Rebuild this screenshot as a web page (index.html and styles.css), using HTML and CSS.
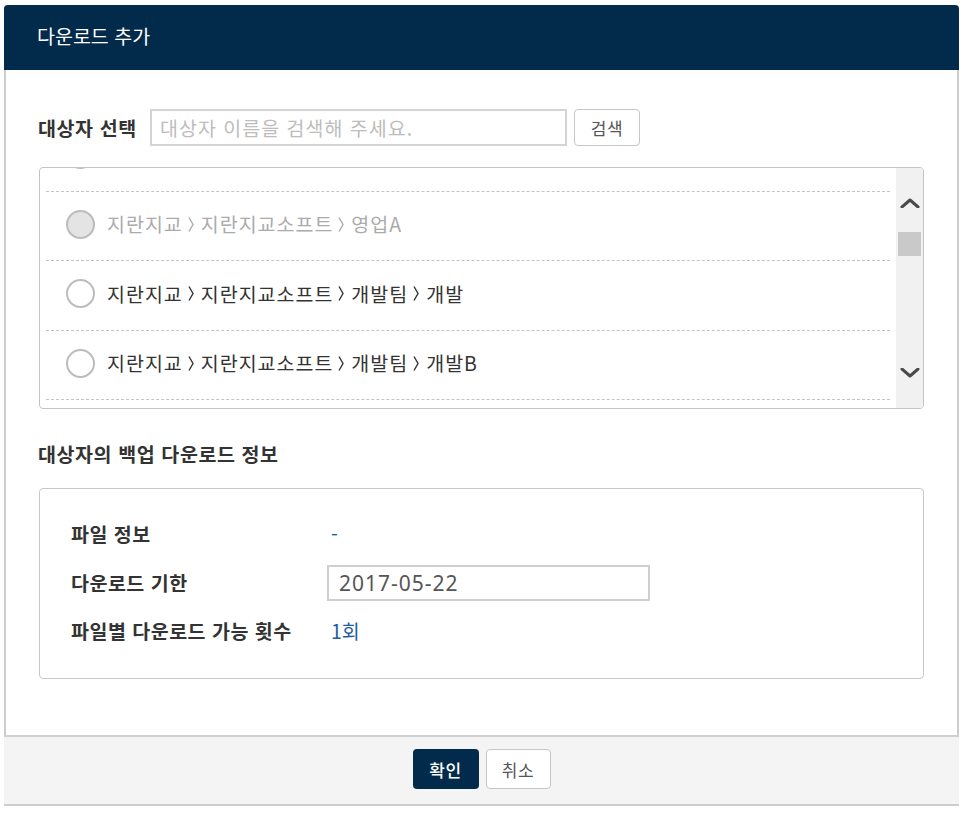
FILE: index.html
```html
<!DOCTYPE html>
<html lang="ko">
<head>
<meta charset="utf-8">
<title>다운로드 추가</title>
<link rel="stylesheet" href="styles.css">
</head>
<body>
<div class="modal">
  <div class="modal-header">다운로드 추가</div>
  <div class="modal-body">
    <div class="search-row">
      <span class="label-strong">대상자 선택</span>
      <input class="search-input" type="text" placeholder="대상자 이름을 검색해 주세요.">
      <button class="btn-light">검색</button>
    </div>

    <div class="list-box">
      <div class="list-view">
        <ul class="list">
          <li class="row"><span class="radio"></span></li>
          <li class="row disabled"><span class="radio"></span><span class="path">지란지교<svg class="sep" viewBox="0 0 6 16"><path d="M1 1 L5 8 L1 15"/></svg>지란지교소프트<svg class="sep" viewBox="0 0 6 16"><path d="M1 1 L5 8 L1 15"/></svg>영업A</span></li>
          <li class="row"><span class="radio"></span><span class="path">지란지교<svg class="sep" viewBox="0 0 6 16"><path d="M1 1 L5 8 L1 15"/></svg>지란지교소프트<svg class="sep" viewBox="0 0 6 16"><path d="M1 1 L5 8 L1 15"/></svg>개발팀<svg class="sep" viewBox="0 0 6 16"><path d="M1 1 L5 8 L1 15"/></svg>개발</span></li>
          <li class="row"><span class="radio"></span><span class="path">지란지교<svg class="sep" viewBox="0 0 6 16"><path d="M1 1 L5 8 L1 15"/></svg>지란지교소프트<svg class="sep" viewBox="0 0 6 16"><path d="M1 1 L5 8 L1 15"/></svg>개발팀<svg class="sep" viewBox="0 0 6 16"><path d="M1 1 L5 8 L1 15"/></svg>개발B</span></li>
          <li class="row"><span class="radio"></span></li>
        </ul>
      </div>
      <div class="scrollbar">
        <svg class="arrow up" viewBox="0 0 20 10"><path d="M2 9 L10 2 L18 9"/></svg>
        <div class="thumb-track"><div class="thumb"></div></div>
        <svg class="arrow down" viewBox="0 0 20 10"><path d="M2 1 L10 8 L18 1"/></svg>
      </div>
    </div>

    <h2 class="section-title">대상자의 백업 다운로드 정보</h2>

    <div class="info-box">
      <div class="info-row">
        <span class="info-label">파일 정보</span>
        <span class="info-value blue">-</span>
      </div>
      <div class="info-row">
        <span class="info-label">다운로드 기한</span>
        <input class="date-input" type="text" value="2017-05-22">
      </div>
      <div class="info-row">
        <span class="info-label">파일별 다운로드 가능 횟수</span>
        <span class="info-value blue">1회</span>
      </div>
    </div>
  </div>
  <div class="modal-footer">
    <button class="btn-primary">확인</button>
    <button class="btn-light btn-cancel">취소</button>
  </div>
</div>
</body>
</html>
```

FILE: styles.css
```css
* { box-sizing: border-box; }

html, body {
  margin: 0;
  padding: 0;
  background: #ffffff;
}

body {
  font-family: "Noto Sans CJK KR", "Noto Sans", sans-serif;
  color: #333333;
  font-size: 19.5px;
  line-height: 26px;
  padding: 5px 0 0 4px;
}

.modal {
  width: 955px;
  height: 801px;
  display: flex;
  flex-direction: column;
  border: 2px solid #cdcdcd;
  border-top: none;
  border-radius: 4px 4px 0 0;
}

.modal-header {
  height: 65px;
  margin: 0 -2px;
  background: #022a4a;
  color: #ffffff;
  border-radius: 4px 4px 0 0;
  padding-left: 33px;
  display: flex;
  align-items: center;
  font-size: 19.5px;
  padding-bottom: 3px;
}

.modal-body {
  flex: 1;
  padding: 39px 33px 0 32px;
}

.search-row {
  display: flex;
  align-items: center;
  height: 37px;
}

.label-strong {
  font-weight: 700;
  color: #333;
  width: 112px;
  letter-spacing: 0.6px;
}

.search-input {
  width: 417px;
  height: 37px;
  border: 2px solid #d4d4d4;
  padding: 0 8px;
  font-family: inherit;
  font-size: 19.5px;
  letter-spacing: 1px;
  color: #333;
  outline: none;
}

.search-input::placeholder {
  color: #bdbdbd;
}

.btn-light {
  height: 37px;
  width: 66px;
  margin-left: 7px;
  background: #ffffff;
  border: 1px solid #c6c6c6;
  border-radius: 4px;
  font-family: inherit;
  font-size: 17px;
  letter-spacing: 0.5px;
  color: #555555;
  padding: 0;
}

.list-box {
  margin-top: 21px;
  margin-left: 1px;
  height: 242px;
  border: 1px solid #c4c4c4;
  border-radius: 4px;
  display: flex;
  overflow: hidden;
}

.list-view {
  flex: 1;
  overflow: hidden;
  padding: 0 6px;
}

.list {
  list-style: none;
  margin: -46px 0 0 0;
  padding: 0;
}

.row {
  height: 69.5px;
  border-bottom: 1px dashed #c4c4c4;
  display: flex;
  align-items: center;
  padding-left: 20px;
  padding-bottom: 3px;
  color: #333333;
}

.radio {
  width: 29px;
  height: 29px;
  border: 2px solid #bcbcbc;
  border-radius: 50%;
  background: #ffffff;
  margin-right: 12px;
  flex: none;
}

.row.disabled { color: #ababab; }
.row.disabled .radio { background: #e4e4e4; }

.path {
  display: flex;
  align-items: center;
  font-size: 19.5px;
  letter-spacing: 1px;
}

.sep {
  width: 6px;
  height: 17px;
  margin: 0 7px 0 5px;
  fill: none;
  stroke: currentColor;
  stroke-width: 1.4;
}

.scrollbar {
  width: 27px;
  background: #f1f1f1;
  display: flex;
  flex-direction: column;
  align-items: center;
}

.arrow {
  width: 20px;
  height: 10px;
  fill: none;
  stroke: #4a4a4a;
  stroke-width: 3;
  stroke-linecap: round;
  stroke-linejoin: round;
}

.arrow.up { margin-top: 30px; }

.thumb-track {
  width: 100%;
  padding: 0 2px;
  margin-top: 24px;
  flex: 1;
}

.thumb {
  height: 24px;
  background: #c9c9c9;
}

.arrow.down { margin-bottom: 30px; }

.section-title {
  margin: 32px 0 0 0;
  font-size: 19.5px;
  line-height: 26px;
  font-weight: 700;
  color: #333333;
  letter-spacing: 0.6px;
}

.info-box {
  margin-top: 21px;
  margin-left: 1px;
  height: 191px;
  border: 1px solid #c8c8c8;
  border-radius: 4px;
  padding: 21px 0 0 31px;
}

.info-row {
  display: flex;
  align-items: center;
  height: 48.5px;
}

.info-label {
  width: 256px;
  font-weight: 700;
  color: #333333;
  letter-spacing: 0.5px;
}

.info-value { padding-left: 4px; }

.blue { color: #1d5e9e; }

.date-input {
  width: 323px;
  height: 36px;
  border: 2px solid #cfcfcf;
  padding: 0 10px;
  font-family: "Noto Sans", "Noto Sans CJK KR", sans-serif;
  font-size: 21px;
  letter-spacing: 1px;
  color: #555555;
  outline: none;
}

.modal-footer {
  height: 69px;
  margin: 0 -2px;
  border-top: 2px solid #d0d0d0;
  background: #f4f4f4;
  display: flex;
  justify-content: center;
  align-items: flex-start;
  padding-top: 12px;
}

.btn-primary {
  width: 66px;
  height: 40px;
  background: #022a4a;
  color: #ffffff;
  border: none;
  border-radius: 4px;
  font-family: inherit;
  font-size: 17px;
  font-weight: 500;
  letter-spacing: 0.5px;
  padding: 0;
}

.btn-cancel {
  width: 65px;
  height: 40px;
  margin-left: 7px;
}
```
